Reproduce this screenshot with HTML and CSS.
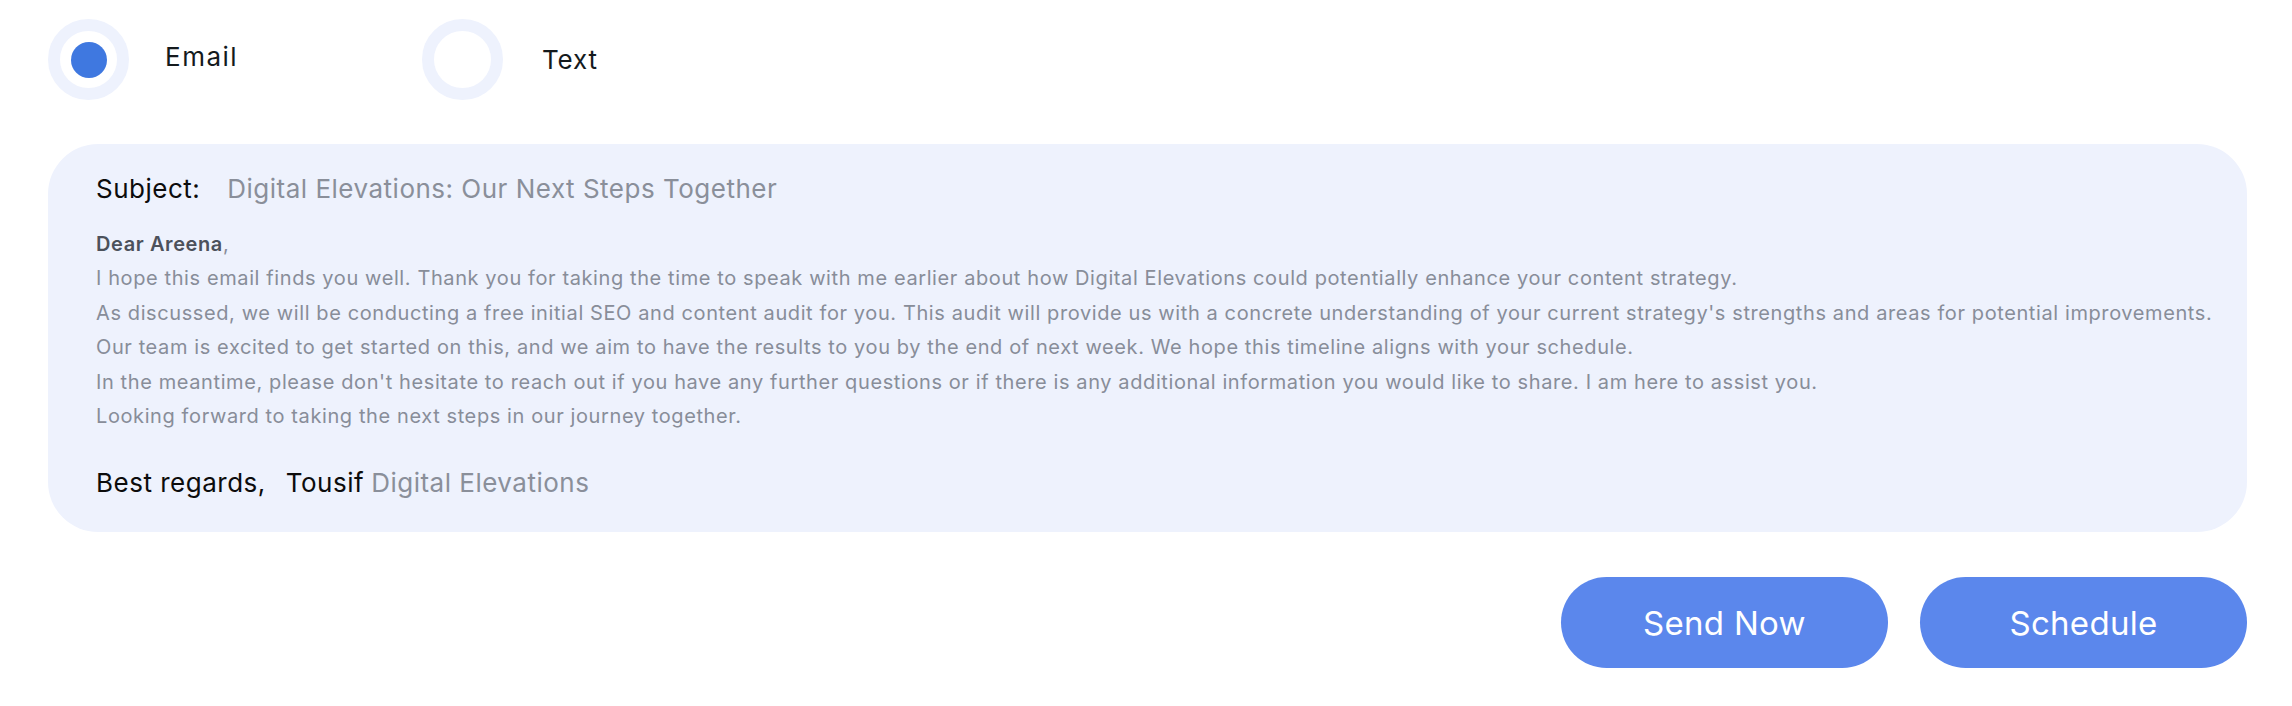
FILE: index.html
```html
<!DOCTYPE html>
<html lang="en">
<head>
<meta charset="utf-8">
<title>Email composer</title>
<link rel="stylesheet" href="styles.css">
</head>
<body>
<div class="page">
  <div class="channels">
    <label class="option">
      <span class="radio radio-on"><span class="dot"></span></span>
      <span class="option-label option-label-email">Email</span>
    </label>
    <label class="option">
      <span class="radio"></span>
      <span class="option-label">Text</span>
    </label>
  </div>

  <div class="card">
    <div class="subject">
      <span class="subject-label">Subject:</span>
      <span class="subject-value">Digital Elevations: Our Next Steps Together</span>
    </div>
    <div class="body">
      <p class="line"><strong class="greet">Dear Areena</strong>,</p>
      <p class="line">I hope this email finds you well. Thank you for taking the time to speak with me earlier about how Digital Elevations could potentially enhance your content strategy.</p>
      <p class="line">As discussed, we will be conducting a free initial SEO and content audit for you. This audit will provide us with a concrete understanding of your current strategy's strengths and areas for potential improvements.</p>
      <p class="line">Our team is excited to get started on this, and we aim to have the results to you by the end of next week. We hope this timeline aligns with your schedule.</p>
      <p class="line">In the meantime, please don't hesitate to reach out if you have any further questions or if there is any additional information you would like to share. I am here to assist you.</p>
      <p class="line">Looking forward to taking the next steps in our journey together.</p>
    </div>
    <div class="signoff">
      <span class="regards">Best regards,</span>
      <span class="name">Tousif</span>
      <span class="company">Digital Elevations</span>
    </div>
  </div>

  <div class="actions">
    <button class="btn">Send Now</button>
    <button class="btn">Schedule</button>
  </div>
</div>
</body>
</html>
```

FILE: styles.css
```css
* { box-sizing: border-box; }

html, body {
  margin: 0;
  padding: 0;
  background: #ffffff;
}

body {
  font-family: Inter, "Open Sans", sans-serif;
  color: #111111;
}

.page {
  padding: 19px 45px 0 48px;
}

.channels {
  display: flex;
  align-items: center;
}

.option {
  display: flex;
  align-items: center;
  gap: 36px;
  width: 374px;
}

.option + .option {
  gap: 39px;
}

.radio {
  width: 81px;
  height: 81px;
  border-radius: 50%;
  border: 12px solid #eef2fd;
  background: #ffffff;
  display: flex;
  align-items: center;
  justify-content: center;
  flex: none;
}

.dot {
  width: 36px;
  height: 36px;
  border-radius: 50%;
  background: #3f78e0;
}

.option-label {
  font-size: 26px;
  letter-spacing: 0.8px;
  color: #141a1d;
  line-height: 1;
}

.option-label-email {
  position: relative;
  top: -3px;
  letter-spacing: 1.5px;
}

.card {
  margin-top: 44px;
  background: #eef2fd;
  border-radius: 50px;
  padding: 28px 48px 32px 48px;
}

.subject {
  display: flex;
  align-items: center;
  gap: 27px;
  line-height: 34px;
  font-size: 26px;
  letter-spacing: 0.5px;
}

.subject-label {
  color: #0c0c0c;
}

.subject-value {
  color: #8a8f9a;
}

.body {
  margin-top: 21px;
}

.line {
  margin: 0;
  font-size: 20px;
  letter-spacing: 0.6px;
  line-height: 34.4px;
  color: #888d99;
  white-space: nowrap;
}

.greet {
  font-weight: 600;
  color: #4c515b;
}

.signoff {
  margin-top: 33px;
  display: flex;
  align-items: center;
  line-height: 34px;
  font-size: 26px;
  letter-spacing: 0.5px;
}

.regards {
  color: #0c0c0c;
  margin-right: 20px;
}

.name {
  color: #0c0c0c;
  margin-right: 7px;
}

.company {
  color: #8a8f9a;
}

.actions {
  margin-top: 45px;
  display: flex;
  justify-content: flex-end;
  gap: 32px;
}

.btn {
  width: 327px;
  height: 91px;
  border: none;
  border-radius: 46px;
  background: #5b87ec;
  color: #ffffff;
  font-family: Inter, "Open Sans", sans-serif;
  font-size: 33px;
  letter-spacing: 0.3px;
  cursor: pointer;
}
```
